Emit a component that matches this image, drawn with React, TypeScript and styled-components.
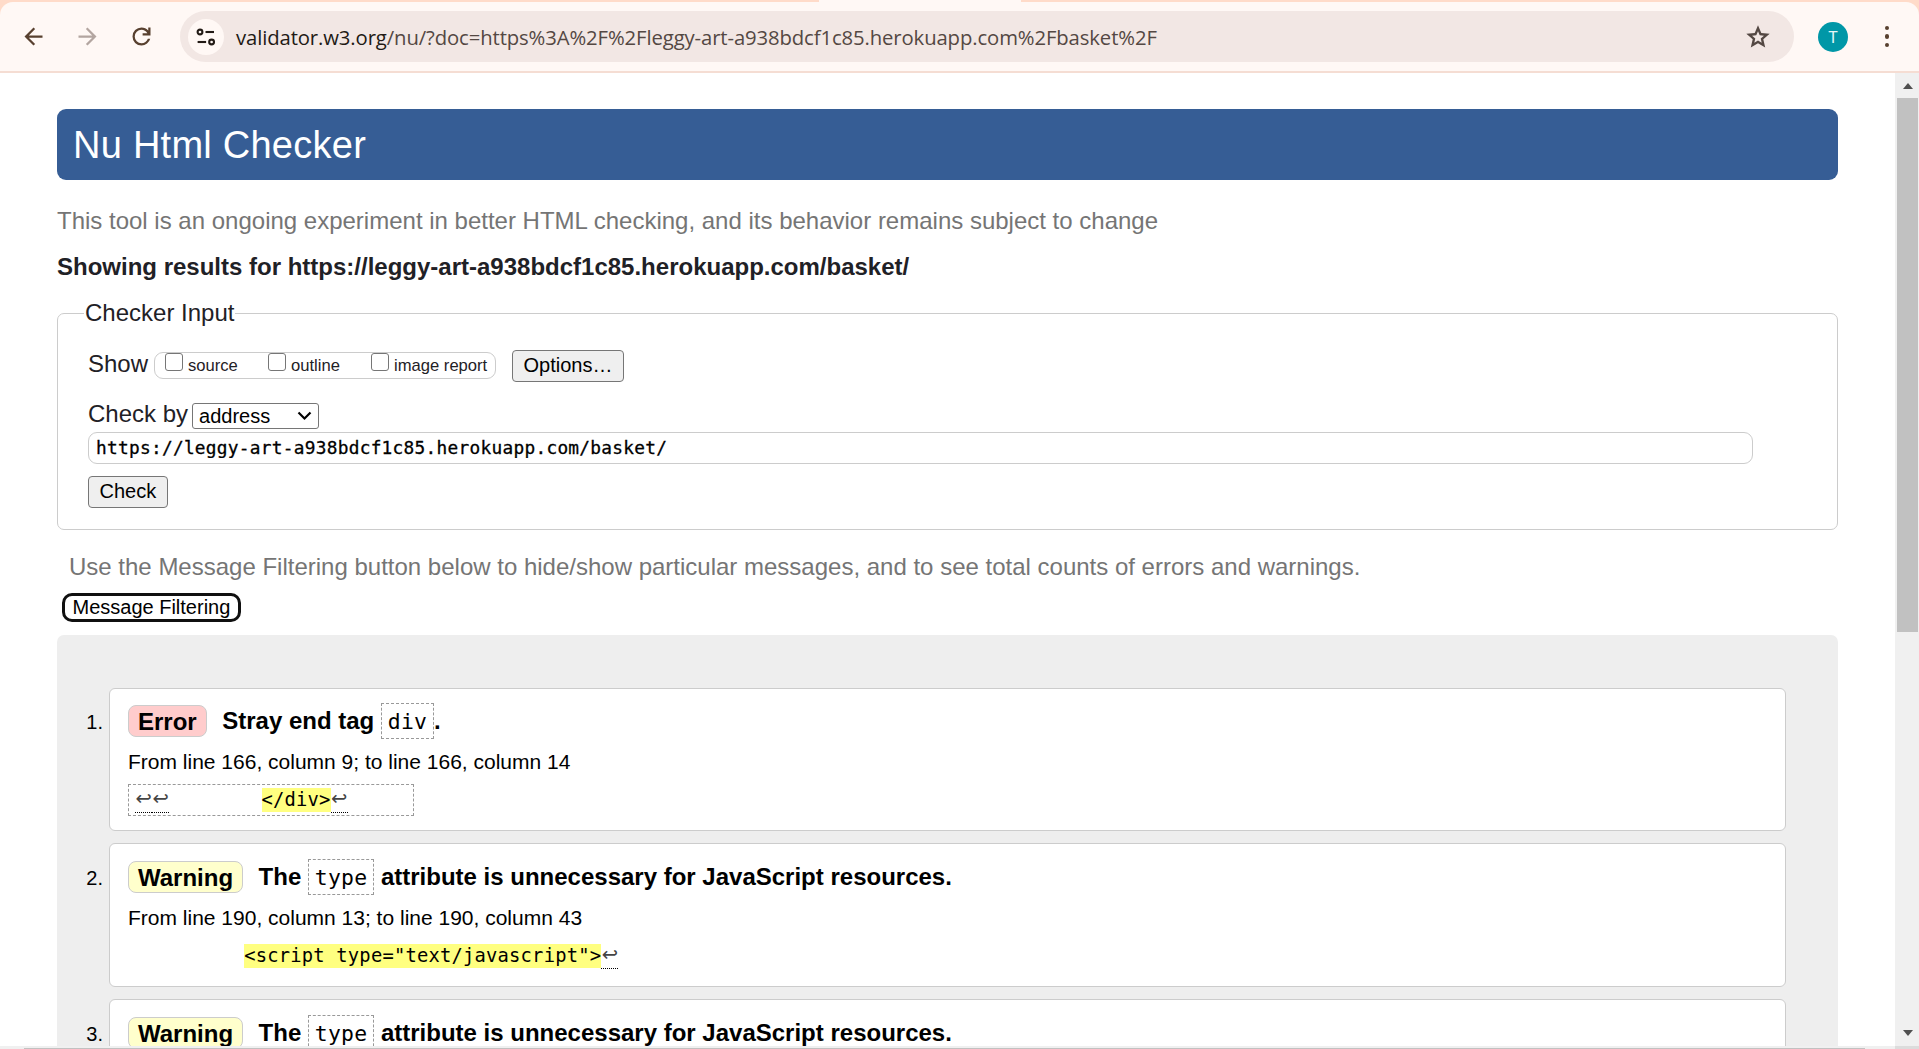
import React from "react";
import styled, { createGlobalStyle } from "styled-components";

const sans = `"Liberation Sans", Arial, sans-serif`;
const mono = `"DejaVu Sans Mono", Consolas, monospace`;

const GlobalStyle = createGlobalStyle`
  * { box-sizing: border-box; }
  body { margin: 0; background: #fff; font-family: ${sans}; overflow: hidden; }
  button, input, select { font: inherit; margin: 0; }
`;

const Window = styled.div`
  display: flex;
  flex-direction: column;
  width: 1919px;
  height: 1049px;
  overflow: hidden;
  background: #ffdbc9;
`;

const TabStrip = styled.div`
  flex: none;
  height: 2px;
  padding-left: 819px;
`;

const ActiveTab = styled.div`
  width: 202px;
  height: 2px;
  background: #fff8f5;
`;

const Toolbar = styled.header`
  flex: none;
  display: flex;
  align-items: center;
  height: 71px;
  padding: 0 20px 0 19px;
  background: #fff8f5;
  border-bottom: 2px solid #f5ddd3;
  border-radius: 13px 13px 0 0;
`;

const NavButton = styled.span<{ $dim?: boolean }>`
  display: flex;
  align-items: center;
  justify-content: center;
  width: 28px;
  height: 28px;
  margin-right: 26px;
  color: ${(p) => (p.$dim ? "#b3a5a0" : "#58402f")};
`;

const Omnibox = styled.div`
  display: flex;
  align-items: center;
  flex: none;
  width: 1614px;
  height: 51px;
  margin-left: -1px;
  padding: 0 22px 0 8px;
  border-radius: 26px;
  background: #f2e7e4;
  color: #544843;
`;

const SiteInfo = styled.span`
  display: flex;
  align-items: center;
  justify-content: center;
  width: 36px;
  height: 36px;
  border-radius: 50%;
  background: #fff8f5;
`;

const Url = styled.span`
  flex: 1;
  margin-left: 12px;
  font: 20.3px/28px "Open Sans", "Segoe UI", sans-serif;
  letter-spacing: -0.11px;
  white-space: nowrap;
  b { font-weight: 400; color: #221a15; }
`;

const Avatar = styled.span`
  width: 30px;
  height: 30px;
  margin: 1px 0 0 24px;
  border-radius: 50%;
  background: #0097a7;
  color: #e6f7f8;
  font: 16px/31px Roboto, sans-serif;
  text-align: center;
`;

const MenuDots = styled.span`
  display: flex;
  flex-direction: column;
  align-items: center;
  gap: 4px;
  width: 20px;
  margin-left: 29px;
  i { width: 4.4px; height: 4.4px; border-radius: 50%; background: #58402f; }
`;

const Viewport = styled.div`
  flex: 1;
  min-height: 0;
  display: flex;
  background: #fff;
`;

const Page = styled.main`
  flex: 1;
  min-width: 0;
  padding: 36px 57px 0;
  overflow: hidden;
  color: #1f2126;
  font-size: 24px;
  line-height: 28px;
`;

const Banner = styled.h1`
  height: 71px;
  margin: 0;
  padding-left: 16px;
  border-radius: 9px;
  background: #365d95;
  color: #fff;
  font-size: 38px;
  font-weight: 400;
  line-height: 73px;
  letter-spacing: 0.25px;
`;

const Note = styled.p<{ $filter?: boolean }>`
  margin: ${(p) => (p.$filter ? "23px 0 0 12px" : "27px 0 0")};
  color: #757575;
`;

const ResultsFor = styled.h2`
  margin: 18px 0 0;
  font-size: 24px;
  line-height: 28px;
`;

const Fieldset = styled.fieldset`
  width: 1781px;
  height: 231px;
  margin: 18px 0 0;
  padding: 23px 84px 0 30px;
  border: 1px solid #ccc;
  border-radius: 7px;
`;

const Legend = styled.legend`
  height: 28px;
  margin-left: -4px;
  padding: 0 1px;
`;

const ShowRow = styled.div`
  display: flex;
  height: 32px;
`;

const CheckGroup = styled.span`
  display: flex;
  width: 342px;
  height: 27px;
  margin: 2px 16px 0 6px;
  padding-left: 10px;
  border: 1px solid #ccc;
  border-radius: 9px;
`;

const CheckLabel = styled.label<{ $width: number }>`
  display: flex;
  gap: 5px;
  width: ${(p) => p.$width}px;
  font-size: 16.6px;
  line-height: 26px;
  white-space: nowrap;
`;

const CheckBox = styled.input`
  appearance: none;
  width: 18px;
  height: 18px;
  border: 1.5px solid #767676;
  border-radius: 3px;
  background: #fff;
`;

const Button = styled.button`
  display: block;
  height: 32px;
  padding: 0 10.5px 2px;
  border: 1px solid #767676;
  border-radius: 4px;
  background: #efefef;
  color: #000;
  font-size: 20px;
  line-height: 28px;
`;

const CheckByRow = styled.div`
  display: flex;
  height: 29px;
  margin-top: 18px;
  gap: 4px;
`;

const SelectBox = styled.span`
  display: flex;
  align-items: center;
  justify-content: space-between;
  width: 127px;
  height: 26px;
  margin-top: 3px;
  padding: 0 6px;
  border: 1px solid #767676;
  border-radius: 3px;
  color: #000;
  font-size: 20px;
  line-height: 24px;
`;

const Address = styled.input`
  display: block;
  width: 1665px;
  height: 32px;
  margin: 3px 0 12px;
  padding: 0 7px 1px;
  border: 1px solid #ccc;
  border-radius: 9px;
  outline: none;
  color: #000;
  -webkit-text-stroke: 0.3px #000;
  && { font: 17.8px/28px ${mono}; letter-spacing: 0.28px; }
`;

const FilterButton = styled.button`
  display: block;
  height: 29px;
  margin: 12px 0 13px 5px;
  padding: 0 7.5px;
  border: 3px solid #101010;
  border-radius: 10px;
  background: #fff;
  color: #000;
  font-size: 20px;
  line-height: 23px;
`;

const Results = styled.ol`
  display: flex;
  flex-direction: column;
  gap: 12px;
  margin: 0;
  padding: 53px 52px 60px 0;
  list-style: none;
  border-radius: 7px;
  background: #eee;
  color: #000;
`;

const Item = styled.li<{ $height: number }>`
  flex: none;
  display: flex;
  height: ${(p) => p.$height}px;
`;

const Index = styled.span<{ $drop: number }>`
  width: 52px;
  padding: ${(p) => 22 + p.$drop}px 6px 0 0;
  text-align: right;
  font-size: 20px;
  line-height: 24px;
`;

const Card = styled.div<{ $drop: number }>`
  flex: 1;
  padding: ${(p) => 14 + p.$drop}px 18px 0;
  border: 1px solid #ccc;
  border-radius: 6px;
  background: #fff;
`;

const Title = styled.p`
  display: flex;
  align-items: center;
  height: 36px;
  margin: 0;
  font-weight: 700;
  white-space: pre;
`;

const Badge = styled.strong<{ $error: boolean }>`
  height: 32px;
  margin-right: 15.5px;
  padding: 0 9px;
  border: 1px solid #ccc;
  border-radius: 8px;
  background: ${(p) => (p.$error ? "#ffcccc" : "#ffffcc")};
  line-height: 31px;
`;

const Code = styled.code`
  height: 36px;
  padding: 0 5.8px;
  border: 1px dashed #999;
  font: 21.4px/35px ${mono};
  letter-spacing: 0.3px;
`;

const Location = styled.p`
  margin: 11px 0 10px;
  font-size: 21px;
  line-height: 24px;
`;

const Extract = styled.code<{ $boxed: boolean }>`
  display: flex;
  align-items: center;
  width: ${(p) => (p.$boxed ? "286px" : "max-content")};
  height: 32px;
  padding-left: ${(p) => (p.$boxed ? 6 : 0)}px;
  border: 1px dashed ${(p) => (p.$boxed ? "#999" : "transparent")};
  font: 18.8px/24px ${mono};
  letter-spacing: 0.21px;
  white-space: pre;
`;

const Mark = styled.mark`
  height: 24px;
  background: #ffff80;
  color: #000;
`;

const Return = styled.span`
  width: 17.2px;
  height: 25px;
  border-bottom: 1px dotted #000;
  font: 19.5px/21px "DejaVu Sans", sans-serif;
  letter-spacing: 0;
  text-align: center;
  color: #444;
`;

const ScrollBar = styled.aside`
  flex: none;
  display: flex;
  flex-direction: column;
  justify-content: space-between;
  align-items: center;
  width: 24px;
  padding: 10px 0 10px;
  background: #f0f0f0;
`;

const Thumb = styled.div`
  width: 21px;
  height: 534px;
  margin: 9px 0 auto 1px;
  background: #c1c1c1;
`;

const Arrow = styled.i<{ $down?: boolean }>`
  width: 0;
  height: 0;
  margin-left: 1px;
  border: solid transparent;
  border-width: ${(p) => (p.$down ? "6px 5.5px 0" : "0 5.5px 6px")};
  border-${(p) => (p.$down ? "top" : "bottom")}-color: #505050;
`;

const BottomBar = styled.footer`
  flex: none;
  display: flex;
  align-items: flex-end;
  height: 3px;
  padding-left: 24px;
  background: #f0f0f0;
`;

const BottomThumb = styled.div`
  width: 1841px;
  height: 1px;
  background: #c1c1c1;
`;

const Corner = styled.div`
  width: 24px;
  height: 3px;
  margin-left: auto;
  background: #dcdcdc;
`;

type Message = {
  kind: "Error" | "Warning";
  height: number;
  drop: number;
  before: string;
  code: string;
  after: string;
  where: string;
  lead: number;
  indent: string;
  mark: string;
};

const typeWarning = {
  kind: "Warning" as const,
  height: 144,
  drop: 1,
  before: "The ",
  code: "type",
  after: " attribute is unnecessary for JavaScript resources.",
  lead: 0,
  indent: " ".repeat(10),
  mark: '<script type="text/javascript">',
};

const messages: Message[] = [
  {
    kind: "Error",
    height: 143,
    drop: 0,
    before: "Stray end tag ",
    code: "div",
    after: ".",
    where: "From line 166, column 9; to line 166, column 14",
    lead: 2,
    indent: " ".repeat(8),
    mark: "</div>",
  },
  { ...typeWarning, where: "From line 190, column 13; to line 190, column 43" },
  { ...typeWarning, where: "From line 191, column 13; to line 191, column 43" },
];

const Glyph = ({ d, size = 27 }: { d: string; size?: number }) => (
  <svg width={size} height={size} viewBox="0 -960 960 960" fill="currentColor">
    <path d={d} />
  </svg>
);

const icons = {
  back: "m313-440 224 224-57 56-320-320 320-320 57 56-224 224h487v80H313Z",
  forward: "M647-440H160v-80h487L423-744l57-56 320 320-320 320-57-56 224-224Z",
  reload:
    "M480-160q-134 0-227-93t-93-227q0-134 93-227t227-93q69 0 132 28.5T720-690v-110h80v280H520v-80h168q-32-56-87.5-88T480-720q-100 0-170 70t-70 170q0 100 70 170t170 70q77 0 139-44t87-116h84q-28 106-114 173t-196 67Z",
  star:
    "m354-287 126-76 126 77-33-144 111-96-146-13-58-136-58 135-146 13 111 97-33 143ZM233-120l65-281L80-590l288-25 112-265 112 265 288 25-218 189 65 281-247-149-247 149Z",
};

const TuneIcon = () => (
  <svg width="20" height="20" viewBox="0 0 20 20" fill="none" stroke="#221a15" strokeWidth="2.1">
    <circle cx="4" cy="5" r="2.4" />
    <path d="M9.5 5H18" />
    <circle cx="15.6" cy="15" r="2.4" />
    <path d="M1.6 15h8.5" />
  </svg>
);

const Chevron = () => (
  <svg width="15" height="10" viewBox="0 0 15 10" fill="none" stroke="#000" strokeWidth="2.2">
    <path d="m1.5 1.5 6 6 6-6" />
  </svg>
);

export default function App() {
  return (
    <Window>
      <GlobalStyle />
      <TabStrip>
        <ActiveTab />
      </TabStrip>
      <Toolbar>
        <NavButton><Glyph d={icons.back} /></NavButton>
        <NavButton $dim><Glyph d={icons.forward} /></NavButton>
        <NavButton><Glyph d={icons.reload} /></NavButton>
        <Omnibox>
          <SiteInfo><TuneIcon /></SiteInfo>
          <Url>
            <b>validator.w3.org</b>/nu/?doc=https%3A%2F%2Fleggy-art-a938bdcf1c85.herokuapp.com%2Fbasket%2F
          </Url>
          <Glyph d={icons.star} size={28} />
        </Omnibox>
        <Avatar>T</Avatar>
        <MenuDots><i /><i /><i /></MenuDots>
      </Toolbar>
      <Viewport>
        <Page>
          <Banner>Nu Html Checker</Banner>
          <Note>This tool is an ongoing experiment in better HTML checking, and its behavior remains subject to change</Note>
          <ResultsFor>Showing results for https://leggy-art-a938bdcf1c85.herokuapp.com/basket/</ResultsFor>
          <Fieldset>
            <Legend>Checker Input</Legend>
            <ShowRow>
              <span>Show</span>
              <CheckGroup>
                <CheckLabel $width={103}><CheckBox type="checkbox" />source</CheckLabel>
                <CheckLabel $width={103}><CheckBox type="checkbox" />outline</CheckLabel>
                <CheckLabel $width={118}><CheckBox type="checkbox" />image report</CheckLabel>
              </CheckGroup>
              <Button>Options…</Button>
            </ShowRow>
            <CheckByRow>
              <span>Check by</span>
              <SelectBox>address<Chevron /></SelectBox>
            </CheckByRow>
            <Address defaultValue="https://leggy-art-a938bdcf1c85.herokuapp.com/basket/" />
            <Button>Check</Button>
          </Fieldset>
          <Note $filter>
            Use the Message Filtering button below to hide/show particular messages, and to see total counts of errors and warnings.
          </Note>
          <FilterButton>Message Filtering</FilterButton>
          <Results>
            {messages.map((m, i) => (
              <Item key={i} $height={m.height}>
                <Index $drop={m.drop}>{i + 1}.</Index>
                <Card $drop={m.drop}>
                  <Title>
                    <Badge $error={m.kind === "Error"}>{m.kind}</Badge>
                    <span>{m.before}</span>
                    <Code>{m.code}</Code>
                    <span>{m.after}</span>
                  </Title>
                  <Location>{m.where}</Location>
                  <Extract $boxed={m.lead > 0}>
                    {Array.from({ length: m.lead }, (_, n) => <Return key={n}>↩</Return>)}
                    <span>{m.indent}</span>
                    <Mark>{m.mark}</Mark>
                    <Return>↩</Return>
                  </Extract>
                </Card>
              </Item>
            ))}
          </Results>
        </Page>
        <ScrollBar>
          <Arrow />
          <Thumb />
          <Arrow $down />
        </ScrollBar>
      </Viewport>
      <BottomBar>
        <BottomThumb />
        <Corner />
      </BottomBar>
    </Window>
  );
}
